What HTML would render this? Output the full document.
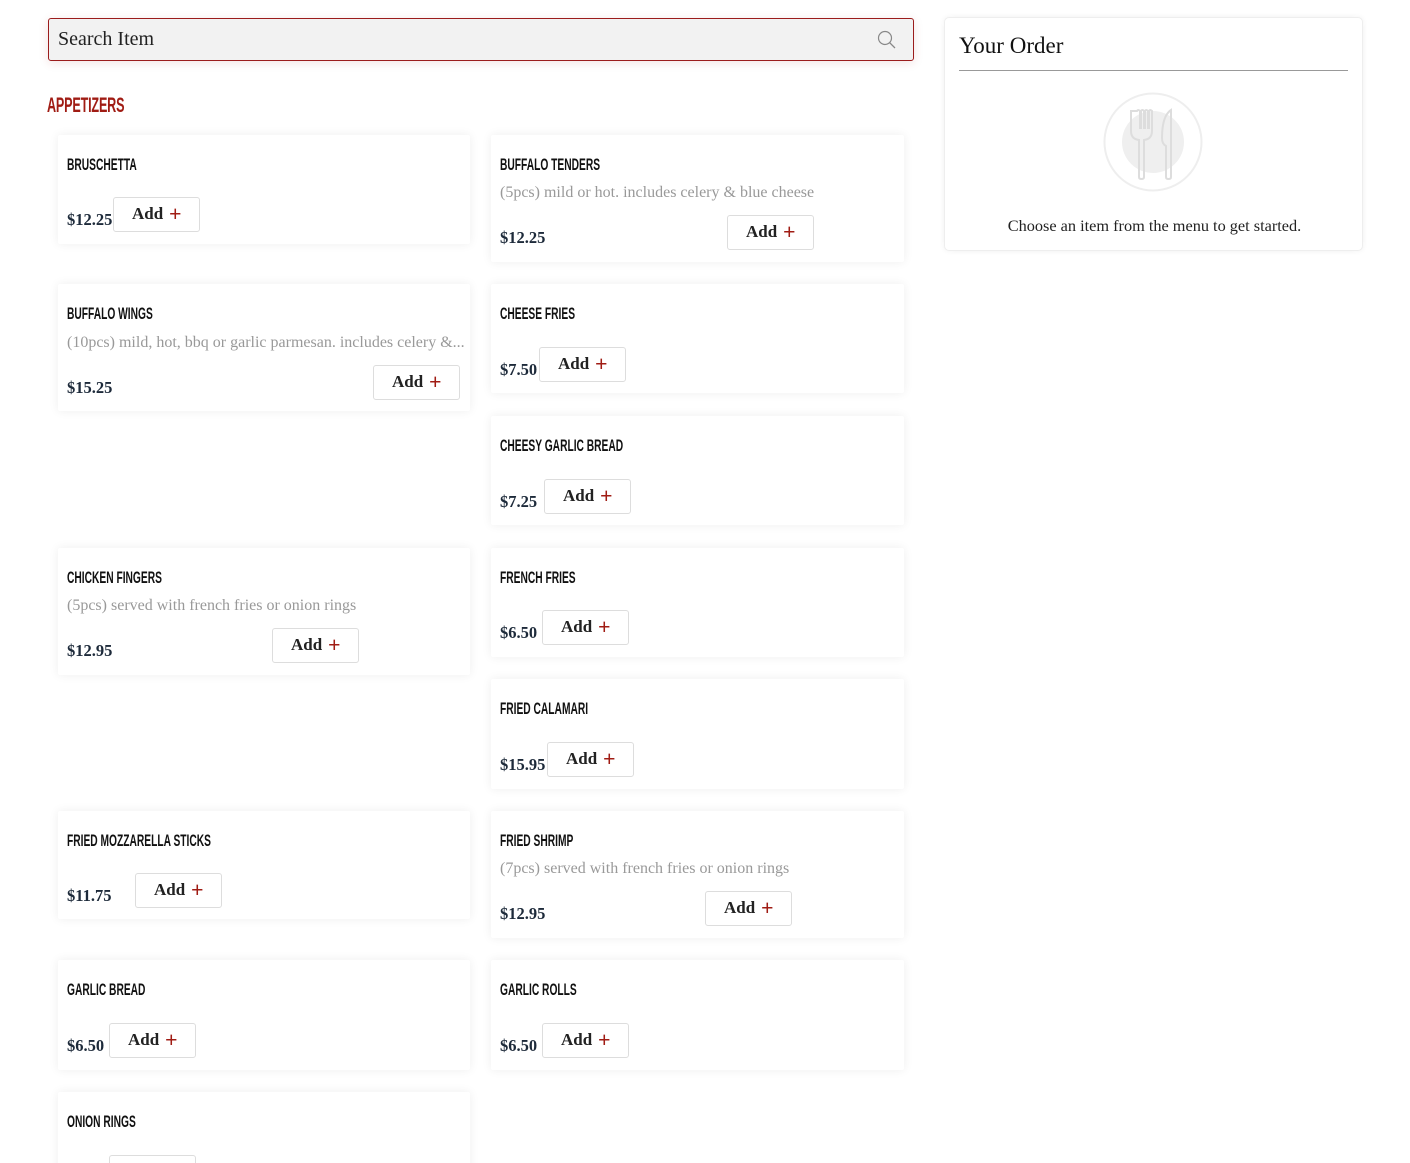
<!DOCTYPE html>
<html><head><meta charset="utf-8"><style>
*{margin:0;padding:0;box-sizing:border-box}
html,body{width:1410px;height:1163px;overflow:hidden}
body{background:#fff;font-family:"Liberation Serif",serif;position:relative}
.a{position:absolute}
.search{left:48px;top:18px;width:866px;height:43px;background:#f2f2f2;border:1px solid #9b1c1c;border-radius:3px;box-shadow:0 2px 10px rgba(155,28,28,.12)}
.search span{position:absolute;left:9px;top:9px;font-size:20px;color:#222}
.cat{left:47px;top:95px;font-family:"Liberation Sans",sans-serif;font-weight:bold;color:#a01c14;font-size:21px;line-height:22px;transform:scaleX(.6);transform-origin:left;letter-spacing:-.3px}
.card{background:#fff;box-shadow:0 0 10px rgba(0,0,0,.07);border-radius:2px}
.t{font-family:"Liberation Sans",sans-serif;font-weight:bold;font-size:16.5px;line-height:16px;color:#111;transform:scaleX(.62);transform-origin:left;white-space:nowrap}
.d{font-size:16px;line-height:16px;color:#999;white-space:nowrap}
.p{font-size:16.5px;font-weight:bold;line-height:18px;color:#1d2a3a}
.b{width:87px;height:35px;border:1px solid #ddd;border-radius:3px;background:#fff;font-weight:bold;font-size:17px;color:#222}
.b span{position:absolute;left:18px;top:6px}
.b i{position:absolute;left:55px;top:3px;font-style:normal;color:#a01c14;font-size:22px;font-weight:bold}
.order{left:944px;top:17px;width:419px;height:234px;border:1px solid #eee;border-radius:5px;box-shadow:0 0 6px rgba(0,0,0,.06)}
</style></head><body>
<div class="a search"><span>Search Item</span>
<svg class="a" style="left:828px;top:11px" width="20" height="20" viewBox="0 0 20 20"><circle cx="8" cy="8" r="6.5" fill="none" stroke="#888" stroke-width="1.2"/><line x1="12.8" y1="12.8" x2="18" y2="18" stroke="#888" stroke-width="1.3"/></svg></div>
<div class="a cat">APPETIZERS</div>

<div class="a order">
<div class="a" style="left:14px;top:15px;font-size:23px;color:#111">Your Order</div>
<div class="a" style="left:14px;top:52px;width:389px;height:1px;background:#999"></div>
<svg class="a" style="left:158px;top:74px" width="101" height="101" viewBox="0 0 101 101"><circle cx="50" cy="50" r="48.5" fill="none" stroke="#eee" stroke-width="2"/><circle cx="50" cy="50" r="31" fill="#efefef"/>
<path d="M28 19 v20 q0 8 8 9 v37 q0 2 2.5 2 q2.5 0 2.5 -2 v-37 q8 -1 8 -9 v-20 q-2 -2 -3 0 v17 h-1 v-17 q-2 -2 -3 0 v17 h-1 v-17 q-2 -2 -3 0 v17 h-1 v-17 q-2 -2 -3 0z" fill="none" stroke="#ddd" stroke-width="2"/>
<path d="M68 18 q-9 6 -9 28 q0 6 4 8 v31 q0 2 2.5 2 q2.5 0 2.5 -2 v-65 q0 -2 0 -2z" fill="none" stroke="#ddd" stroke-width="2"/></svg>
<div class="a" style="left:0;width:419px;text-align:center;top:198px;font-size:16.3px;color:#222">Choose an item from the menu to get started.</div>
</div>

<div class="a card" style="left:58px;top:135px;width:412px;height:109px"></div>
<div class="a card" style="left:491px;top:135px;width:413px;height:127px"></div>
<div class="a card" style="left:58px;top:284px;width:412px;height:127px"></div>
<div class="a card" style="left:491px;top:284px;width:413px;height:109px"></div>
<div class="a card" style="left:491px;top:416px;width:413px;height:109px"></div>
<div class="a card" style="left:58px;top:548px;width:412px;height:127px"></div>
<div class="a card" style="left:491px;top:548px;width:413px;height:109px"></div>
<div class="a card" style="left:491px;top:679px;width:413px;height:110px"></div>
<div class="a card" style="left:58px;top:811px;width:412px;height:108px"></div>
<div class="a card" style="left:491px;top:811px;width:413px;height:127px"></div>
<div class="a card" style="left:58px;top:960px;width:412px;height:110px"></div>
<div class="a card" style="left:491px;top:960px;width:413px;height:110px"></div>
<div class="a card" style="left:58px;top:1092px;width:412px;height:110px"></div>

<div class="a t" style="left:67px;top:157px">BRUSCHETTA</div>
<div class="a p" style="left:67px;top:211px">$12.25</div>
<div class="a b" style="left:113px;top:197px"><span>Add</span><i>+</i></div>

<div class="a t" style="left:500px;top:157px">BUFFALO TENDERS</div>
<div class="a d" style="left:500px;top:185px">(5pcs) mild or hot. includes celery &amp; blue cheese</div>
<div class="a p" style="left:500px;top:229px">$12.25</div>
<div class="a b" style="left:727px;top:215px"><span>Add</span><i>+</i></div>

<div class="a t" style="left:67px;top:306px">BUFFALO WINGS</div>
<div class="a d" style="left:67px;top:335px">(10pcs) mild, hot, bbq or garlic parmesan. includes celery &amp;...</div>
<div class="a p" style="left:67px;top:379px">$15.25</div>
<div class="a b" style="left:373px;top:365px"><span>Add</span><i>+</i></div>

<div class="a t" style="left:500px;top:306px">CHEESE FRIES</div>
<div class="a p" style="left:500px;top:361px">$7.50</div>
<div class="a b" style="left:539px;top:347px"><span>Add</span><i>+</i></div>

<div class="a t" style="left:500px;top:438px">CHEESY GARLIC BREAD</div>
<div class="a p" style="left:500px;top:493px">$7.25</div>
<div class="a b" style="left:544px;top:479px"><span>Add</span><i>+</i></div>

<div class="a t" style="left:67px;top:570px">CHICKEN FINGERS</div>
<div class="a d" style="left:67px;top:598px">(5pcs) served with french fries or onion rings</div>
<div class="a p" style="left:67px;top:642px">$12.95</div>
<div class="a b" style="left:272px;top:628px"><span>Add</span><i>+</i></div>

<div class="a t" style="left:500px;top:570px">FRENCH FRIES</div>
<div class="a p" style="left:500px;top:624px">$6.50</div>
<div class="a b" style="left:542px;top:610px"><span>Add</span><i>+</i></div>

<div class="a t" style="left:500px;top:701px">FRIED CALAMARI</div>
<div class="a p" style="left:500px;top:756px">$15.95</div>
<div class="a b" style="left:547px;top:742px"><span>Add</span><i>+</i></div>

<div class="a t" style="left:67px;top:833px">FRIED MOZZARELLA STICKS</div>
<div class="a p" style="left:67px;top:887px">$11.75</div>
<div class="a b" style="left:135px;top:873px"><span>Add</span><i>+</i></div>

<div class="a t" style="left:500px;top:833px">FRIED SHRIMP</div>
<div class="a d" style="left:500px;top:861px">(7pcs) served with french fries or onion rings</div>
<div class="a p" style="left:500px;top:905px">$12.95</div>
<div class="a b" style="left:705px;top:891px"><span>Add</span><i>+</i></div>

<div class="a t" style="left:67px;top:982px">GARLIC BREAD</div>
<div class="a p" style="left:67px;top:1037px">$6.50</div>
<div class="a b" style="left:109px;top:1023px"><span>Add</span><i>+</i></div>

<div class="a t" style="left:500px;top:982px">GARLIC ROLLS</div>
<div class="a p" style="left:500px;top:1037px">$6.50</div>
<div class="a b" style="left:542px;top:1023px"><span>Add</span><i>+</i></div>

<div class="a t" style="left:67px;top:1114px">ONION RINGS</div>
<div class="a b" style="left:109px;top:1155px"><span>Add</span><i>+</i></div>
</body></html>
